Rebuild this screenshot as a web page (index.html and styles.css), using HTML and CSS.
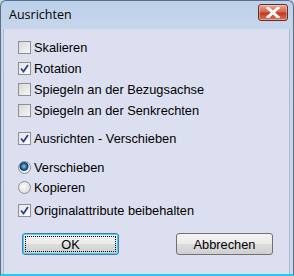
FILE: index.html
```html
<!DOCTYPE html>
<html>
<head>
<meta charset="utf-8">
<link rel="stylesheet" href="styles.css">
</head>
<body>
<div class="window">
  <div class="titlebar">
    <span class="title">Ausrichten</span>
    <span class="close">
      <svg width="14" height="11" viewBox="0 0 14 11"><path d="M2 1 L12 10 M12 1 L2 10" stroke="#fff" stroke-width="3" stroke-linecap="square"/></svg>
    </span>
  </div>
  <div class="client">
    <div class="group">
      <div class="row"><span class="cb"></span><span>Skalieren</span></div>
      <div class="row"><span class="cb checked"><svg width="9" height="9" viewBox="0 0 9 9"><path d="M1 4.5 L3.5 7.5 L8 1" fill="none" stroke="#2a3f9a" stroke-width="1.8"/></svg></span><span>Rotation</span></div>
      <div class="row"><span class="cb"></span><span>Spiegeln an der Bezugsachse</span></div>
      <div class="row"><span class="cb"></span><span>Spiegeln an der Senkrechten</span></div>
    </div>
    <div class="group g2">
      <div class="row"><span class="cb checked"><svg width="9" height="9" viewBox="0 0 9 9"><path d="M1 4.5 L3.5 7.5 L8 1" fill="none" stroke="#2a3f9a" stroke-width="1.8"/></svg></span><span>Ausrichten - Verschieben</span></div>
    </div>
    <div class="group g3">
      <div class="row r-radio"><span class="rb on"></span><span>Verschieben</span></div>
      <div class="row r-radio"><span class="rb"></span><span>Kopieren</span></div>
    </div>
    <div class="group g4">
      <div class="row"><span class="cb checked"><svg width="9" height="9" viewBox="0 0 9 9"><path d="M1 4.5 L3.5 7.5 L8 1" fill="none" stroke="#2a3f9a" stroke-width="1.8"/></svg></span><span>Originalattribute beibehalten</span></div>
    </div>
    <div class="buttons">
      <div class="btn default"><span class="focus">OK</span></div>
      <div class="btn">Abbrechen</div>
    </div>
  </div>
</div>
</body>
</html>
```
FILE: styles.css
```css
html, body { margin: 0; padding: 0; }
body { width: 294px; height: 276px; overflow: hidden; background: #c9d6ea; font-family: "Liberation Sans", Arial, sans-serif; font-size: 12px; color: #000; }
.window { box-sizing: border-box; width: 294px; height: 276px; border: 1px solid #5a6f8c; border-radius: 6px 6px 0 0; background: linear-gradient(#bcd1ea, #c7d6ec 30px, #cbd8ec); display: flex; flex-direction: column; border-bottom: 2px solid #29c6f0; }
.titlebar { height: 28px; display: flex; align-items: center; justify-content: space-between; padding: 0 5px 0 8px; flex: none; }
.title { font-family: "Open Sans", "Noto Sans", sans-serif; font-size: 12.5px; color: #000; margin-top: -2px; }
.close { width: 28px; height: 15px; margin-top: -5px; border: 1px solid #6b2a22; border-radius: 3px; background: linear-gradient(#e9a99a, #d6664f 45%, #c0391f 55%, #d8785c); display: flex; align-items: center; justify-content: center; box-shadow: inset 0 0 0 1px rgba(255,255,255,0.35); }
.client { flex: 1; margin: 0 3px 0 2px; background: #dcdfef; border-left: 1px solid #aeb9cc; border-right: 1px solid #aeb9cc; padding: 12px 0 0 14px; display: flex; flex-direction: column; font-size: 12.8px; }
.group { display: flex; flex-direction: column; gap: 8px; }
.row { display: flex; align-items: center; height: 13px; gap: 3px; white-space: nowrap; }
.g2 { margin-top: 15px; }
.g3 { margin-top: 16px; gap: 7px; }
.g4 { margin-top: 10px; }
.cb { box-sizing: border-box; width: 13px; height: 13px; border: 1px solid #8e8f8f; background: linear-gradient(135deg, #d8d8d8, #f6f6f6); display: flex; align-items: center; justify-content: center; flex: none; }
.cb.checked { background: linear-gradient(135deg, #e6e6e6, #fbfbfb); }
.rb { box-sizing: border-box; width: 13px; height: 13px; border-radius: 50%; border: 1px solid #8e8f8f; background: radial-gradient(circle at 40% 40%, #fafafa, #d4d4d4); flex: none; }
.rb.on { background: radial-gradient(circle at 45% 40%, #8ad0f0 0, #1c5a9a 3px, #0d3a6a 4px, #f0f0f0 5px, #dcdcdc); }
.buttons { display: flex; justify-content: space-between; margin-top: 16px; padding-right: 16px; padding-left: 4px; }
.btn { box-sizing: border-box; width: 97px; height: 22px; border: 1px solid #707070; border-radius: 3px; background: linear-gradient(#f3f3f3, #ebebeb 50%, #dddddd 51%, #cfcfcf); display: flex; align-items: center; justify-content: center; font-size: 12.8px; }
.btn.default { border-color: #3c7fb1; box-shadow: inset 0 0 0 1px #48d0f5; padding: 2px; }
.focus { flex: 1; align-self: stretch; display: flex; align-items: center; justify-content: center; border: 1px dotted #000; }
```
